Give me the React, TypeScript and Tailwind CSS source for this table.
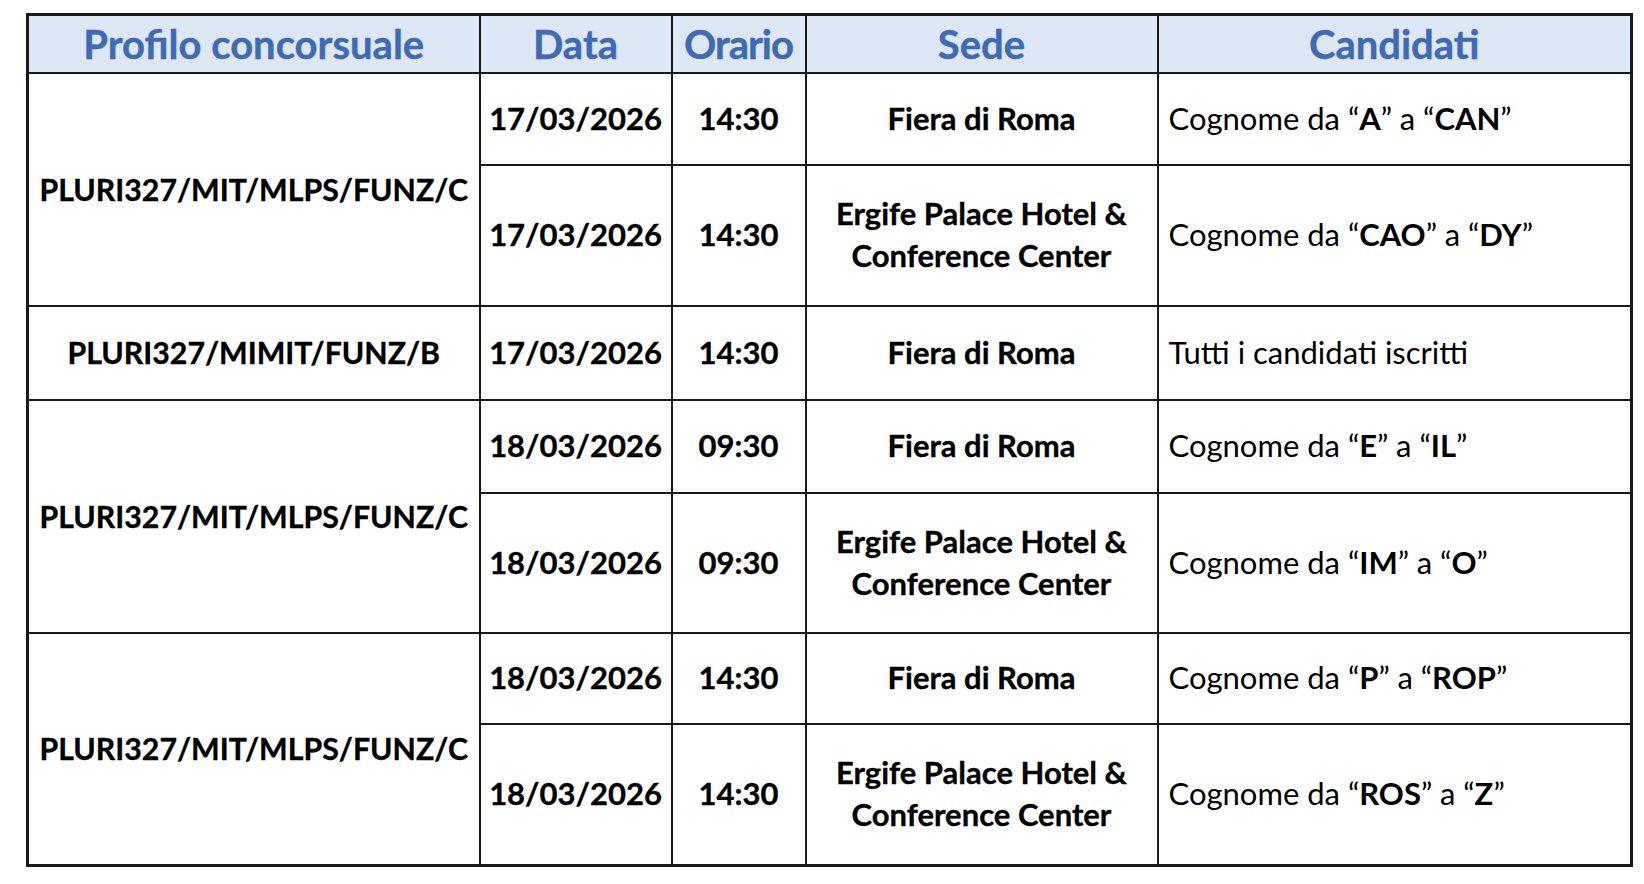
const FONT = "font-['Lato','Noto_Sans',sans-serif]";

type Row = {
  profilo?: { text: string; span: number };
  data: string;
  orario: string;
  sede: string[];
  cand: React.ReactNode;
  h: string;
};

function Range({ from, to }: { from: string; to: string }) {
  return (
    <>
      Cognome da “<b>{from}</b>” a “<b>{to}</b>”
    </>
  );
}

const ergife = ["Ergife Palace Hotel &", "Conference Center"];
const fiera = ["Fiera di Roma"];

const rows: Row[] = [
  {
    profilo: { text: "PLURI327/MIT/MLPS/FUNZ/C", span: 2 },
    data: "17/03/2026",
    orario: "14:30",
    sede: fiera,
    cand: <Range from="A" to="CAN" />,
    h: "h-[92px]",
  },
  { data: "17/03/2026", orario: "14:30", sede: ergife, cand: <Range from="CAO" to="DY" />, h: "h-[141px]" },
  {
    profilo: { text: "PLURI327/MIMIT/FUNZ/B", span: 1 },
    data: "17/03/2026",
    orario: "14:30",
    sede: fiera,
    cand: "Tutti i candidati iscritti",
    h: "h-[94px]",
  },
  {
    profilo: { text: "PLURI327/MIT/MLPS/FUNZ/C", span: 2 },
    data: "18/03/2026",
    orario: "09:30",
    sede: fiera,
    cand: <Range from="E" to="IL" />,
    h: "h-[93px]",
  },
  { data: "18/03/2026", orario: "09:30", sede: ergife, cand: <Range from="IM" to="O" />, h: "h-[140px]" },
  {
    profilo: { text: "PLURI327/MIT/MLPS/FUNZ/C", span: 2 },
    data: "18/03/2026",
    orario: "14:30",
    sede: fiera,
    cand: <Range from="P" to="ROP" />,
    h: "h-[91px]",
  },
  { data: "18/03/2026", orario: "14:30", sede: ergife, cand: <Range from="ROS" to="Z" />, h: "h-[142px]" },
];

const cell = "border-2 border-[#1a1a1a] p-0 align-middle";
const bold = "text-center font-bold [-webkit-text-stroke:0.35px_black]";

export default function App() {
  return (
    <div className={`min-h-screen bg-white pl-[26px] pt-[13px] ${FONT}`}>
      <table className="table-fixed border-collapse border-[3px] border-[#1a1a1a] text-black">
        <colgroup>
          <col className="w-[452px]" />
          <col className="w-[192px]" />
          <col className="w-[134px]" />
          <col className="w-[352px]" />
          <col className="w-[474px]" />
        </colgroup>
        <thead>
          <tr className="h-[58px] bg-[#dde7f5] text-[40px] font-bold leading-none text-[#3f6ab5] [-webkit-text-stroke:0.4px_#3f6ab5]">
            <th className={cell}>Profilo concorsuale</th>
            <th className={cell}>Data</th>
            <th className={`${cell} tracking-[-1px]`}>Orario</th>
            <th className={cell}>Sede</th>
            <th className={cell}>Candidati</th>
          </tr>
        </thead>
        <tbody className="text-[31px] leading-[1.35]">
          {rows.map((r, i) => (
            <tr key={i} className={r.h}>
              {r.profilo && (
                <td rowSpan={r.profilo.span} className={`${cell} ${bold} text-[30.3px]`}>
                  {r.profilo.text}
                </td>
              )}
              <td className={`${cell} ${bold}`}>{r.data}</td>
              <td className={`${cell} ${bold}`}>{r.orario}</td>
              <td className={`${cell} ${bold}`}>
                {r.sede.map((s) => (
                  <div key={s}>{s}</div>
                ))}
              </td>
              <td className={`${cell} pl-[10px] text-left`}>{r.cand}</td>
            </tr>
          ))}
        </tbody>
      </table>
    </div>
  );
}
